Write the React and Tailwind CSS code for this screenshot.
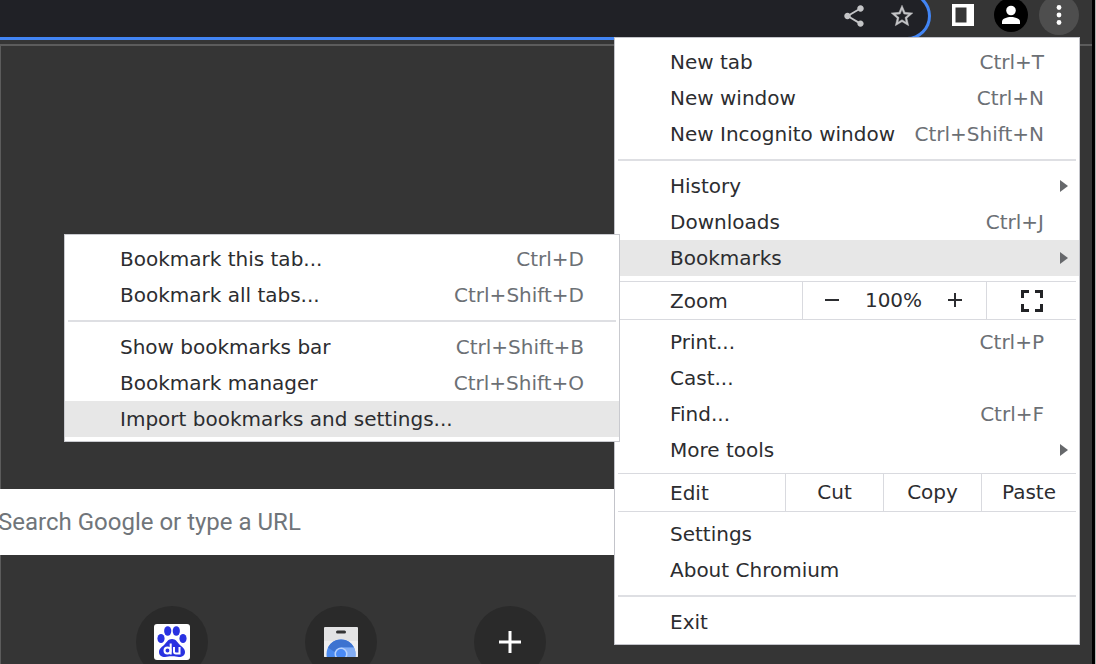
import React from "react";

const iconButton = "flex shrink-0 items-center justify-center";

function Separator() {
  return (
    <div role="separator" className="px-[3px] py-[7px]">
      <div className="h-0.5 bg-[#dedfe3]" />
    </div>
  );
}

function MenuItem({ label, shortcut, submenu, active, children }) {
  return (
    <div className="relative">
      <button
        type="button"
        role="menuitem"
        className={
          active
            ? "flex h-9 w-full items-center justify-between bg-[#e7e7e7] pr-[35px] pl-[55px] text-left"
            : "flex h-9 w-full items-center justify-between pr-[35px] pl-[55px] text-left"
        }
      >
        <span>{label}</span>
        {shortcut && <span className="text-[#6c7075]">{shortcut}</span>}
        {submenu && (
          <svg viewBox="0 0 8 12" className="-mr-6 h-3 w-2" aria-hidden="true">
            <path d="M0 0 8 6 0 12Z" fill="#66686b" />
          </svg>
        )}
      </button>
      {children}
    </div>
  );
}

function Submenu() {
  return (
    <div
      role="menu"
      aria-label="Bookmarks"
      className="absolute -top-1.5 right-[calc(100%-5px)] w-[556px] border border-[#c9cacf] bg-white pt-1.5 pb-1"
    >
      <MenuItem label="Bookmark this tab..." shortcut="Ctrl+D" />
      <MenuItem label="Bookmark all tabs..." shortcut="Ctrl+Shift+D" />
      <Separator />
      <MenuItem label="Show bookmarks bar" shortcut="Ctrl+Shift+B" />
      <MenuItem label="Bookmark manager" shortcut="Ctrl+Shift+O" />
      <MenuItem label="Import bookmarks and settings..." active />
    </div>
  );
}

function MainMenu() {
  return (
    <div
      role="menu"
      aria-label="Chromium"
      className="absolute top-[37px] right-3 w-[466px] border border-[#c3c4ca] bg-white pt-1.5 pb-1 font-['DejaVu_Sans',sans-serif] text-[20px] leading-6 text-[#2c2d30]"
    >
      <MenuItem label="New tab" shortcut="Ctrl+T" />
      <MenuItem label="New window" shortcut="Ctrl+N" />
      <MenuItem label="New Incognito window" shortcut="Ctrl+Shift+N" />
      <Separator />
      <MenuItem label="History" submenu />
      <MenuItem label="Downloads" shortcut="Ctrl+J" />
      <MenuItem label="Bookmarks" submenu active>
        <Submenu />
      </MenuItem>
      <div className="mx-[3px] mt-[5px] mb-1 flex h-[39px] items-stretch border-y border-[#d9dadf]">
        <span className="flex flex-1 items-center pl-[52px]">Zoom</span>
        <div className="flex w-[184px] items-center justify-between border-l border-[#d9dadf] pr-6 pb-0.5 pl-[22px]">
          <button type="button" aria-label="Zoom out">
            <svg viewBox="0 0 14 14" className="size-3.5" stroke="#2c2d30" strokeWidth="2">
              <path d="M0 7H14" />
            </svg>
          </button>
          <span>100%</span>
          <button type="button" aria-label="Zoom in">
            <svg viewBox="0 0 14 14" className="size-3.5" stroke="#2c2d30" strokeWidth="2">
              <path d="M0 7H14M7 0V14" />
            </svg>
          </button>
        </div>
        <button
          type="button"
          aria-label="Full screen"
          className="flex w-[90px] items-center justify-center border-l border-[#d9dadf]"
        >
          <svg viewBox="0 0 22 22" className="size-[22px]" fill="none" stroke="#222326" strokeWidth="3">
            <path d="M1.500 8V1.500H8M14 1.500H20.500V8M20.500 14V20.500H14M8 20.500H1.500V14" />
          </svg>
        </button>
      </div>
      <MenuItem label="Print..." shortcut="Ctrl+P" />
      <MenuItem label="Cast..." />
      <MenuItem label="Find..." shortcut="Ctrl+F" />
      <MenuItem label="More tools" submenu />
      <div className="mx-[3px] mt-[5px] mb-1 flex h-[39px] items-stretch border-y border-[#d9dadf]">
        <span className="flex flex-1 items-center pl-[52px]">Edit</span>
        <button type="button" className="w-[98px] border-l border-[#d9dadf] pb-0.5">Cut</button>
        <button type="button" className="w-[98px] border-l border-[#d9dadf] pb-0.5">Copy</button>
        <button type="button" className="w-[95px] border-l border-[#d9dadf] pb-0.5">Paste</button>
      </div>
      <MenuItem label="Settings" />
      <MenuItem label="About Chromium" />
      <Separator />
      <MenuItem label="Exit" />
    </div>
  );
}

function Toolbar() {
  return (
    <header className="flex h-[46px] items-start overflow-hidden border-b-2 border-[#5c5c5c]">
      <div className="-mt-2 flex h-12 flex-1 items-center justify-end gap-[22px] rounded-r-full border-[3px] border-l-0 border-[#4285f4] bg-[#202126] pr-[13px]">
        <button type="button" aria-label="Share this page" className={iconButton}>
          <svg viewBox="0 0 24 24" className="size-[26px]" fill="#c4c5c7">
            <path d="M18 16.080c-.76 0-1.440.3-1.960.77L8.910 12.700c.05-.23.09-.46.09-.7s-.04-.47-.09-.7l7.050-4.110c.54.5 1.250.81 2.040.81 1.660 0 3-1.340 3-3s-1.340-3-3-3-3 1.340-3 3c0 .24.04.47.09.7L8.040 9.810C7.500 9.310 6.790 9 6 9c-1.660 0-3 1.340-3 3s1.340 3 3 3c.79 0 1.500-.31 2.040-.81l7.120 4.160c-.05.21-.08.43-.08.65 0 1.610 1.310 2.920 2.920 2.920s2.920-1.310 2.920-2.920-1.310-2.920-2.920-2.920z" />
          </svg>
        </button>
        <button type="button" aria-label="Bookmark this tab" className={iconButton}>
          <svg viewBox="0 0 24 24" className="size-[26px]" fill="#c4c5c7" stroke="#c4c5c7" strokeWidth="0.4">
            <path d="M22 9.240l-7.190-.62L12 2 9.190 8.630 2 9.240l5.460 4.730L5.820 21 12 17.270 18.180 21l-1.630-7.030L22 9.240zM12 15.400l-3.760 2.270 1-4.280-3.320-2.880 4.380-.38L12 6.100l1.710 4.040 4.380.38-3.320 2.880 1 4.280L12 15.400z" />
          </svg>
        </button>
      </div>
      <div className="-mt-[5px] flex h-10 items-center pr-[13px] pl-[21px]">
        <button type="button" aria-label="Side panel" className={iconButton}>
          <svg viewBox="0 0 22 22" className="size-[22px]">
            <path fill="#fff" fillRule="evenodd" d="M0 0H22V22H0ZM3.500 3.500V18.500H14.500V3.500Z" />
          </svg>
        </button>
        <button type="button" aria-label="Profile" className="ml-5 flex size-[34px] shrink-0 items-center justify-center rounded-full bg-black">
          <svg viewBox="0 0 20 20" className="size-5" fill="#fff">
            <circle cx="10" cy="5.500" r="4.800" />
            <path d="M1 19V16.500C1 13.500 6 12 10 12S19 13.500 19 16.500V19Z" />
          </svg>
        </button>
        <button type="button" aria-label="Chromium menu" className="ml-[11px] flex size-10 shrink-0 items-center justify-center rounded-full bg-[#4e4e4e]">
          <svg viewBox="0 0 6 22" className="h-[22px] w-1.5" fill="#fff">
            <circle cx="3" cy="3.500" r="2.400" />
            <circle cx="3" cy="11" r="2.400" />
            <circle cx="3" cy="18.500" r="2.400" />
          </svg>
        </button>
      </div>
    </header>
  );
}

function BaiduIcon() {
  return (
    <svg viewBox="0 0 36 36" className="size-9" aria-hidden="true">
      <rect width="36" height="36" rx="3" fill="#fff" />
      <g fill="#2932e1">
        <ellipse cx="7" cy="14.500" rx="3.600" ry="4.600" />
        <ellipse cx="13.700" cy="7" rx="3.600" ry="4.800" />
        <ellipse cx="22.300" cy="7" rx="3.600" ry="4.800" />
        <ellipse cx="29" cy="14.500" rx="3.600" ry="4.600" />
        <path d="M18 15c-4 0-5 3-7.500 5.500S5 24.500 5 28c0 3.500 2.500 5 6 5 2.500 0 4-.7 7-.7s4.500.7 7 .7c3.500 0 6-1.500 6-5 0-3.500-3-5-5.500-7.500S22 15 18 15Z" />
      </g>
      <g fill="none" stroke="#fff" strokeWidth="2">
        <circle cx="13.500" cy="26.500" r="3" />
        <path d="M16.700 19.500V30.500M20 23V27.500Q20 29.500 22 29.500H25.500M25.500 23V30.500" />
      </g>
    </svg>
  );
}

function WebStoreIcon() {
  return (
    <svg viewBox="0 0 34 30" className="h-[30px] w-[34px]" aria-hidden="true">
      <defs>
        <clipPath id="store-bag">
          <rect width="34" height="30" rx="1" />
        </clipPath>
      </defs>
      <g clipPath="url(#store-bag)">
        <rect width="34" height="30" fill="#e3e3e4" />
        <rect y="14" width="34" height="16" fill="#eeeeef" />
        <rect x="12" y="3.500" width="10" height="3" rx="1.500" fill="#333" />
        <circle cx="17" cy="27" r="14.500" fill="#4a8af0" />
        <path d="M4 20.500A14.500 14.500 0 0 1 30 20.500H17A7 7 0 0 0 10.500 25Z" fill="#3d73d0" />
        <path d="M17 20.500H30Q32 24 31.500 30H22Z" fill="#82adf4" />
        <circle cx="17" cy="27" r="6.500" fill="#b9d2fb" />
        <circle cx="17" cy="27" r="5" fill="#4a8af5" />
      </g>
    </svg>
  );
}

function Shortcut({ label, children }) {
  return (
    <a
      href="#"
      aria-label={label}
      className="flex size-[72px] shrink-0 items-center justify-center rounded-full bg-[#2a2a2a]"
    >
      {children}
    </a>
  );
}

export default function App() {
  return (
    <div className="h-screen overflow-hidden border-r border-[#b4b4b4]">
      <div className="relative h-full overflow-hidden border-r-[3px] border-black bg-[#353535]">
        <Toolbar />
        <main className="h-full border-l border-[#5c5c5c] pt-[443px]">
          <div className="-ml-px mr-10 bg-white">
            <input
              type="text"
              aria-label="Search"
              placeholder="Search Google or type a URL"
              className="-ml-0.5 block h-[66px] w-full bg-white font-[Roboto,sans-serif] text-[24px] text-[#202124] outline-none placeholder:text-[#70757a]"
            />
          </div>
          <nav aria-label="Shortcuts" className="mt-[51px] flex gap-[97px] pl-[135px]">
            <Shortcut label="Baidu">
              <BaiduIcon />
            </Shortcut>
            <Shortcut label="Web Store">
              <WebStoreIcon />
            </Shortcut>
            <Shortcut label="Add shortcut">
              <svg viewBox="0 0 22 22" className="size-[22px]" stroke="#fff" strokeWidth="3">
                <path d="M0 11H22M11 0V22" />
              </svg>
            </Shortcut>
          </nav>
        </main>
        <MainMenu />
      </div>
    </div>
  );
}
